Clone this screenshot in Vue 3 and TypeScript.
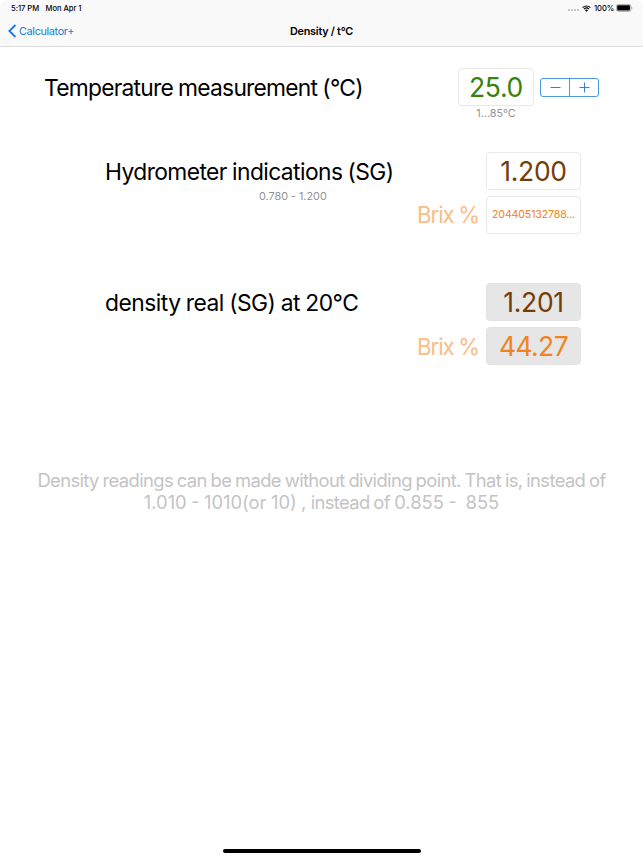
<script setup lang="ts">
import { ref, computed } from 'vue'

const temperature = ref<number>(25)
const temperatureText = computed<string>(() => temperature.value.toFixed(1))

function step(delta: number): void {
  temperature.value = Math.min(85, Math.max(1, temperature.value + delta))
}
</script>

<template>
  <div class="screen">
    <header class="top">
      <div class="status">
        <span class="time">5:17 PM</span>
        <span class="date">Mon Apr 1</span>
        <span class="dots"><i v-for="n in 4" :key="n"></i></span>
        <svg class="wifi" width="9" height="7" viewBox="0 0 18 14">
          <path d="M1.2 5.2a11.2 11.2 0 0 1 15.6 0" />
          <path d="M4 8.2a7.2 7.2 0 0 1 10 0" />
          <path class="solid" d="M9 13.6L5.9 10.4a4.5 4.5 0 0 1 6.2 0z" />
        </svg>
        <span class="percent">100%</span>
        <svg class="battery" width="17" height="8" viewBox="0 0 17 8">
          <rect class="shell" x="0.4" y="0.4" width="14.4" height="7" rx="1.8" />
          <rect x="1.2" y="1.2" width="12.8" height="5.4" rx="1" />
          <path class="cap" d="M15.4 2.8q1 .3 1 1.1t-1 1.1z" />
        </svg>
      </div>
      <nav class="nav">
        <a class="back">
          <svg width="9" height="14" viewBox="0 0 9 14"><path d="M7.4 1L1.4 7l6 6" /></svg>
          <span>Calculator+</span>
        </a>
        <h1>Density / t°C</h1>
      </nav>
    </header>

    <main>
      <section class="row temperature">
        <div class="label">Temperature measurement (°C)</div>
        <div class="stack">
          <div class="field green">{{ temperatureText }}</div>
          <small class="range">1...85°C</small>
        </div>
        <div class="stepper">
          <button aria-label="Decrease" @click="step(-1)">
            <svg width="11" height="11" viewBox="0 0 11 11"><path d="M.5 5.5h10" /></svg>
          </button>
          <button aria-label="Increase" @click="step(1)">
            <svg width="11" height="11" viewBox="0 0 11 11"><path d="M.5 5.5h10M5.5.5v10" /></svg>
          </button>
        </div>
      </section>

      <section class="group hydrometer">
        <div class="row">
          <div class="label">Hydrometer indications (SG)</div>
          <div class="field brown">1.200</div>
        </div>
        <div class="row">
          <small class="span">0.780 - 1.200</small>
          <div class="brix">Brix %</div>
          <div class="field orange tiny">204405132788...</div>
        </div>
      </section>

      <section class="group density">
        <div class="row">
          <div class="label">density real (SG) at 20°C</div>
          <div class="field brown filled">1.201</div>
        </div>
        <div class="row">
          <div class="brix">Brix %</div>
          <div class="field orange filled final">44.27</div>
        </div>
      </section>

      <p class="note">
        <span class="first">Density readings can be made without dividing point. That is, instead of</span>
        <span class="second">1.010 - 1010(or 10) , <span class="words">instead of</span> 0.855 -&nbsp; 855</span>
      </p>
    </main>
    <div class="home"></div>
  </div>
</template>

<style>
body {
  background: #fff;
}
</style>

<style scoped>
* {
  box-sizing: border-box;
}
.screen {
  width: 643px;
  height: 858px;
  display: flex;
  flex-direction: column;
  background: #fff;
  overflow: hidden;
  font-family: Inter, "Liberation Sans", sans-serif;
  color: #000;
  white-space: nowrap;
}
.top {
  height: 47px;
  background: #f9f9f9;
  border-bottom: 1px solid #dcdcdc;
  border-radius: 8px 8px 0 0;
}
.status {
  height: 16px;
  display: flex;
  align-items: center;
  padding: 0 10px 0 11px;
  font-size: 7.6px;
  font-weight: 500;
}
.time {
  width: 34.5px;
  letter-spacing: -0.04px;
}
.date {
  letter-spacing: -0.04px;
}
.dots {
  display: flex;
  gap: 1.2px;
  margin: 4px 3px 0 auto;
}
.dots i {
  width: 1.8px;
  height: 1.8px;
  border-radius: 50%;
  background: #bbb;
}
.wifi {
  fill: none;
  stroke: #000;
  stroke-width: 2.2;
}
.wifi .solid {
  fill: #000;
  stroke: none;
}
.percent {
  width: 20px;
  margin: 0 2px 0 3px;
  letter-spacing: -0.05px;
}
.battery .shell {
  fill: none;
  stroke: #999;
  stroke-width: 0.8;
}
.battery .cap {
  fill: #999;
}
.nav {
  height: 30px;
  display: grid;
  grid-template-columns: 1fr auto 1fr;
  align-items: center;
}
.back {
  display: flex;
  align-items: center;
  gap: 2px;
  padding-left: 8px;
  color: #207dd8;
  font-size: 10.9px;
  letter-spacing: -0.36px;
}
.back svg {
  fill: none;
  stroke: #1479e4;
  stroke-width: 1.8;
}
h1 {
  margin: 0;
  font-size: 10.8px;
  font-weight: 600;
  letter-spacing: -0.24px;
}
main {
  flex: 1;
  padding-top: 21px;
}
.row {
  display: flex;
  align-items: flex-start;
}
.label {
  font-size: 22.8px;
  line-height: 40px;
  height: 38px;
}
.temperature {
  height: 84px;
  padding-left: 44px;
}
.temperature .label {
  width: 414px;
  letter-spacing: -0.75px;
  word-spacing: -0.6px;
}
.stack {
  width: 76px;
  display: flex;
  flex-direction: column;
  align-items: center;
}
.field {
  width: 95px;
  height: 38px;
  border: 1px solid #e9e9e9;
  border-radius: 4px;
  font-size: 26.5px;
  line-height: 36px;
  text-align: center;
  letter-spacing: -0.3px;
}
.stack .field {
  width: 76px;
}
.green {
  color: #37820b;
}
.brown {
  color: #743d08;
}
.orange {
  color: #ef8521;
}
.filled {
  background: #e6e6e6;
  border-color: #e3e3e3;
}
.final {
  letter-spacing: -0.6px;
}
.tiny {
  font-size: 10.7px;
  letter-spacing: -0.2px;
}
small {
  color: #929292;
  font-size: 10.8px;
  line-height: 14px;
}
.range {
  margin-top: 1px;
}
.stepper {
  width: 59px;
  height: 19px;
  display: flex;
  margin: 10px 0 0 6px;
  border: 1px solid #4a97e0;
  border-radius: 3px;
}
.stepper button {
  flex: 1;
  display: flex;
  align-items: center;
  justify-content: center;
  padding: 0;
  border: 0;
  background: none;
}
.stepper button + button {
  border-left: 1px solid #4a97e0;
}
.stepper svg {
  fill: none;
  stroke: #2a83dc;
  stroke-width: 1;
}
.group {
  display: flex;
  flex-direction: column;
  gap: 6px;
  padding-left: 105px;
}
.group .label {
  width: 381px;
}
.hydrometer {
  height: 131px;
}
.hydrometer .label {
  letter-spacing: -0.58px;
  word-spacing: -0.6px;
}
.density .label {
  letter-spacing: -0.5px;
  word-spacing: -0.6px;
}
.span {
  width: 158px;
  margin: -6px 0 0 154px;
}
.brix {
  width: 69px;
  height: 38px;
  color: #f9bd85;
  font-size: 22.2px;
  line-height: 39px;
  letter-spacing: -1px;
  word-spacing: -0.8px;
}
.hydrometer .brix {
  line-height: 38px;
}
.density .brix {
  margin-left: 312px;
}
.note {
  display: flex;
  flex-direction: column;
  align-items: center;
  margin: 104px 0 0;
  color: #c4c4c4;
  font-size: 18.4px;
  line-height: 22px;
}
.first {
  letter-spacing: -0.62px;
  word-spacing: -0.8px;
}
.second {
  letter-spacing: 0;
  word-spacing: -0.8px;
}
.words {
  letter-spacing: -0.65px;
}
.home {
  width: 198px;
  height: 4px;
  margin: 0 auto 5px;
  border-radius: 2px;
  background: #000;
}
</style>
